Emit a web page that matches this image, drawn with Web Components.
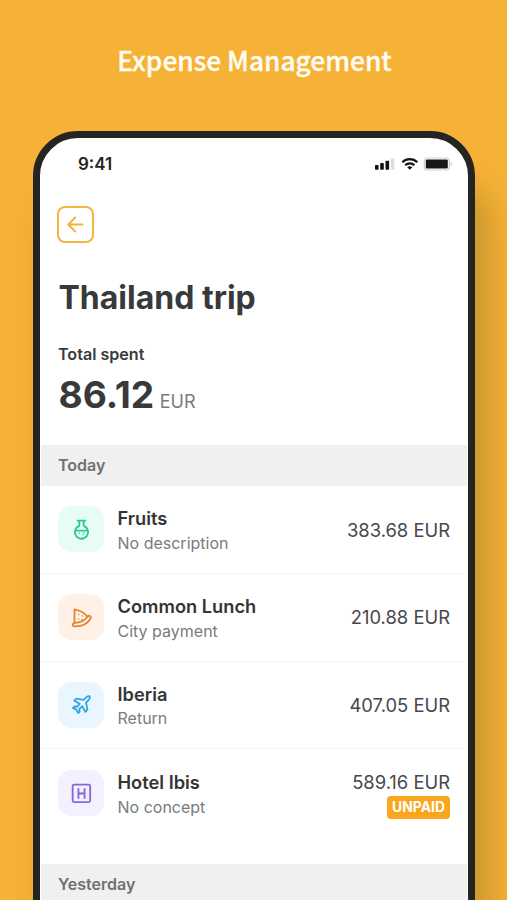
<!DOCTYPE html>
<html lang="en">
<head>
<meta charset="utf-8">
<title>Expense Management</title>
<style>
html,body{margin:0;height:900px;overflow:hidden;background:#f6b137}
body{font-family:Inter,"Liberation Sans",sans-serif}
</style>
</head>
<body>
<promo-page heading="Expense Management">
  <phone-frame>
    <status-bar time="9:41"></status-bar>
    <trip-header name="Thailand trip" label="Total spent" amount="86.12" currency="EUR"></trip-header>
    <day-section label="Today">
      <expense-row icon="flask" tint="#e8fcf5" ink="#27ca90" name="Fruits" note="No description" amount="383.68 EUR"></expense-row>
      <expense-row icon="pizza" tint="#fff1e6" ink="#e08632" name="Common Lunch" note="City payment" amount="210.88 EUR"></expense-row>
      <expense-row icon="plane" tint="#e9f6ff" ink="#35a4e0" name="Iberia" note="Return" amount="407.05 EUR"></expense-row>
      <expense-row icon="hotel" tint="#f3f0ff" ink="#8468dc" name="Hotel Ibis" note="No concept" amount="589.16 EUR" badge="UNPAID"></expense-row>
    </day-section>
    <day-section label="Yesterday"></day-section>
  </phone-frame>
</promo-page>
<script>
const define = (tag, render) => customElements.define(tag, class extends HTMLElement {
  connectedCallback() {
    if (this.shadowRoot) return;
    this.attachShadow({mode: 'open'}).innerHTML = render(n => this.getAttribute(n) || '');
  }
});

const icons = {
  flask: '<path d="M7.5 1.8h9M9.5 2.2v5.6a7.6 7.6 0 1 0 5 0V2.2M4.8 13.2h14.4"/><path d="M9.5 16.4h.1M13.8 17.8h.1M14.8 15.8h.1" stroke-width="1.7"/>',
  pizza: '<path d="M4 18.2V2.8c5.9 1.2 11.6 4.2 15 8.4"/><path d="M19 10.8c-3.2 4.5-8.4 7.1-14.5 7.3-3 .1-3.1 4 .1 4.1 8.1.2 14.3-3.3 17.6-8.7 1.4-2.5-1.5-4.8-3.2-2.7z"/><path d="M8.7 8.6h.1M13.2 10.2h.1M8.8 13.8h.1M12.6 14.2h.1" stroke-width="1.7"/>',
  plane: '<path d="m14.3 6.8 3.5-3.3c1.1-1 2.5-1.4 3.5-.8.6 1 .2 2.5-.8 3.6L17.2 9.8l1.6 8-2.4 2.5-3.6-6.3-3.4 3.4.5 2.7-1.7 1.7-2.1-3.9-3.9-2.1 1.7-1.7 2.7.5 3.4-3.4-6.3-3.6 2.5-2.4z"/>',
  hotel: '<rect x="1.9" y="1.9" width="20" height="20" rx="1.8"/><path d="M8.5 6.8v10.4M15.5 6.8v10.4M8.5 12h7"/>'
};

define('promo-page', a => `
<style>
:host{display:flex;flex-direction:column;align-items:center;height:900px;overflow:hidden;background:#f6b137}
h1{margin:0;box-sizing:border-box;height:131px;flex:none;padding:41px 0 0 2px;color:#fffdf2;font:500 26.3px/38px "Noto Sans CJK SC","Noto Sans",sans-serif;-webkit-text-stroke:.35px #fffdf2;white-space:nowrap}
</style><h1>${a('heading')}</h1><slot></slot>`);

define('phone-frame', () => `
<style>
:host{display:flex;flex-direction:column;flex:none;box-sizing:border-box;width:442px;height:830px;background:#fff;border:7px solid #242423;border-radius:45px;box-shadow:16px 50px 30px rgba(140,115,30,.42);margin-left:1px}
</style><slot></slot>`);

define('status-bar', a => `
<style>
:host{display:flex;justify-content:space-between;align-items:center;height:52px;flex:none;padding:0 15px 0 38px}
span{font-weight:600;font-size:17px;color:#232323}
svg{display:block}
</style>
<span>${a('time')}</span>
<svg width="78" height="16" viewBox="0 0 78 16">
<g fill="#111"><rect x="0" y="9" width="3.6" height="4.8" rx=".8"/><rect x="5.2" y="7" width="3.6" height="6.8" rx=".8"/><rect x="10.5" y="4.7" width="3.6" height="9.1" rx=".8"/></g>
<rect x="15.8" y="2.4" width="3.5" height="11.4" rx=".8" fill="#ddd"/>
<g fill="none" stroke="#151515" stroke-width="2.2"><path d="M27.3 6.3c4.2-4.2 10.8-4.2 15 0M30.2 9.1c2.6-2.4 6.6-2.4 9.2 0"/></g>
<path d="M32.2 11.2c1.5-1.2 3.7-1.2 5.2 0l-2.6 2.6z" fill="#151515"/>
<rect x="49.3" y="2" width="25" height="12" rx="3" fill="#fff" stroke="#d0d0d0" stroke-width="1.2"/><rect x="50.8" y="3.5" width="22" height="9" rx="1.2" fill="#181818"/><path d="M75.6 6v4.2q1.4-.6 1.4-2.1T75.6 6" fill="#ccc"/>
</svg>`);

define('trip-header', a => `
<style>
:host{display:flex;flex-direction:column;flex:none;box-sizing:border-box;height:255px;padding:16px 18px 0;color:#38393b}
button{all:unset;box-sizing:border-box;width:37px;height:37px;border:2px solid #f5b444;border-radius:8px;display:grid;place-items:center;margin-left:-1px}
h2{margin:35px 0 0;font-size:32px;line-height:40px;font-weight:700;white-space:nowrap;padding-left:.5px}
.l{margin-top:24px;font-size:16.1px;line-height:24px;font-weight:600}
.t{display:flex;align-items:baseline;gap:5.5px;line-height:48px;margin-top:5px;padding-left:.5px}
b{font-size:37.2px;font-weight:700}.c{font-size:18px;color:#7b7b7c}
</style>
<button aria-label="Back"><svg width="17" height="17" viewBox="0 0 17 17" fill="none" stroke="#f4b03a" stroke-width="1.8" stroke-linecap="round" stroke-linejoin="round"><path d="M15.5 8.5H1.5M8.2 1.5l-7 7 7 7"/></svg></button>
<h2>${a('name')}</h2><div class="l">${a('label')}</div>
<div class="t"><b>${a('amount')}</b><span class="c">${a('currency')}</span></div>`);

define('day-section', a => `
<style>
:host{display:block;flex:none}
header{box-sizing:border-box;height:41px;margin:0 1px;padding:0 0 0 17px;line-height:40px;background:#f0f0f0;color:#707071;font-weight:600;font-size:16px}
</style><header>${a('label')}</header><slot></slot>`);

define('expense-row', a => `
<style>
:host{display:flex;box-sizing:border-box;height:87.75px;align-items:center;padding:0 17px 0 18px;border-bottom:1px solid #f5f5f5;margin:0 1px 0 0}
:host([badge]){height:114.75px;padding-bottom:27px;border:0}
.i{width:46px;height:46px;border-radius:13px;display:grid;place-items:center;background:${a('tint')};flex:none}
.x{margin-left:13.5px;flex:1;padding-top:3.5px}
.n{font-weight:600;font-size:18.25px;line-height:24.5px;color:#343436}
.s{font-size:16px;line-height:25px;color:#7b7b7c}
.a{display:flex;flex-direction:column;align-items:flex-end;font-size:18.4px;line-height:24.5px;color:#48484a;padding-top:1px}
:host([badge]) .a{padding-top:3px}
.b{height:23px;padding:0 5px;border-radius:4px;background:#faa61c;color:#fff;font:700 13.9px/23.5px Inter,sans-serif;margin-top:1.5px}
</style>
<div class="i"><svg width="21" height="21" viewBox="0 0 24 24" fill="none" stroke="${a('ink')}" stroke-width="2.1" stroke-linecap="round" stroke-linejoin="round">${icons[a('icon')]}</svg></div>
<div class="x"><div class="n">${a('name')}</div><div class="s">${a('note')}</div></div>
<div class="a"><span>${a('amount')}</span>${a('badge') && `<span class="b">${a('badge')}</span>`}</div>`);
</script>
</body>
</html>
